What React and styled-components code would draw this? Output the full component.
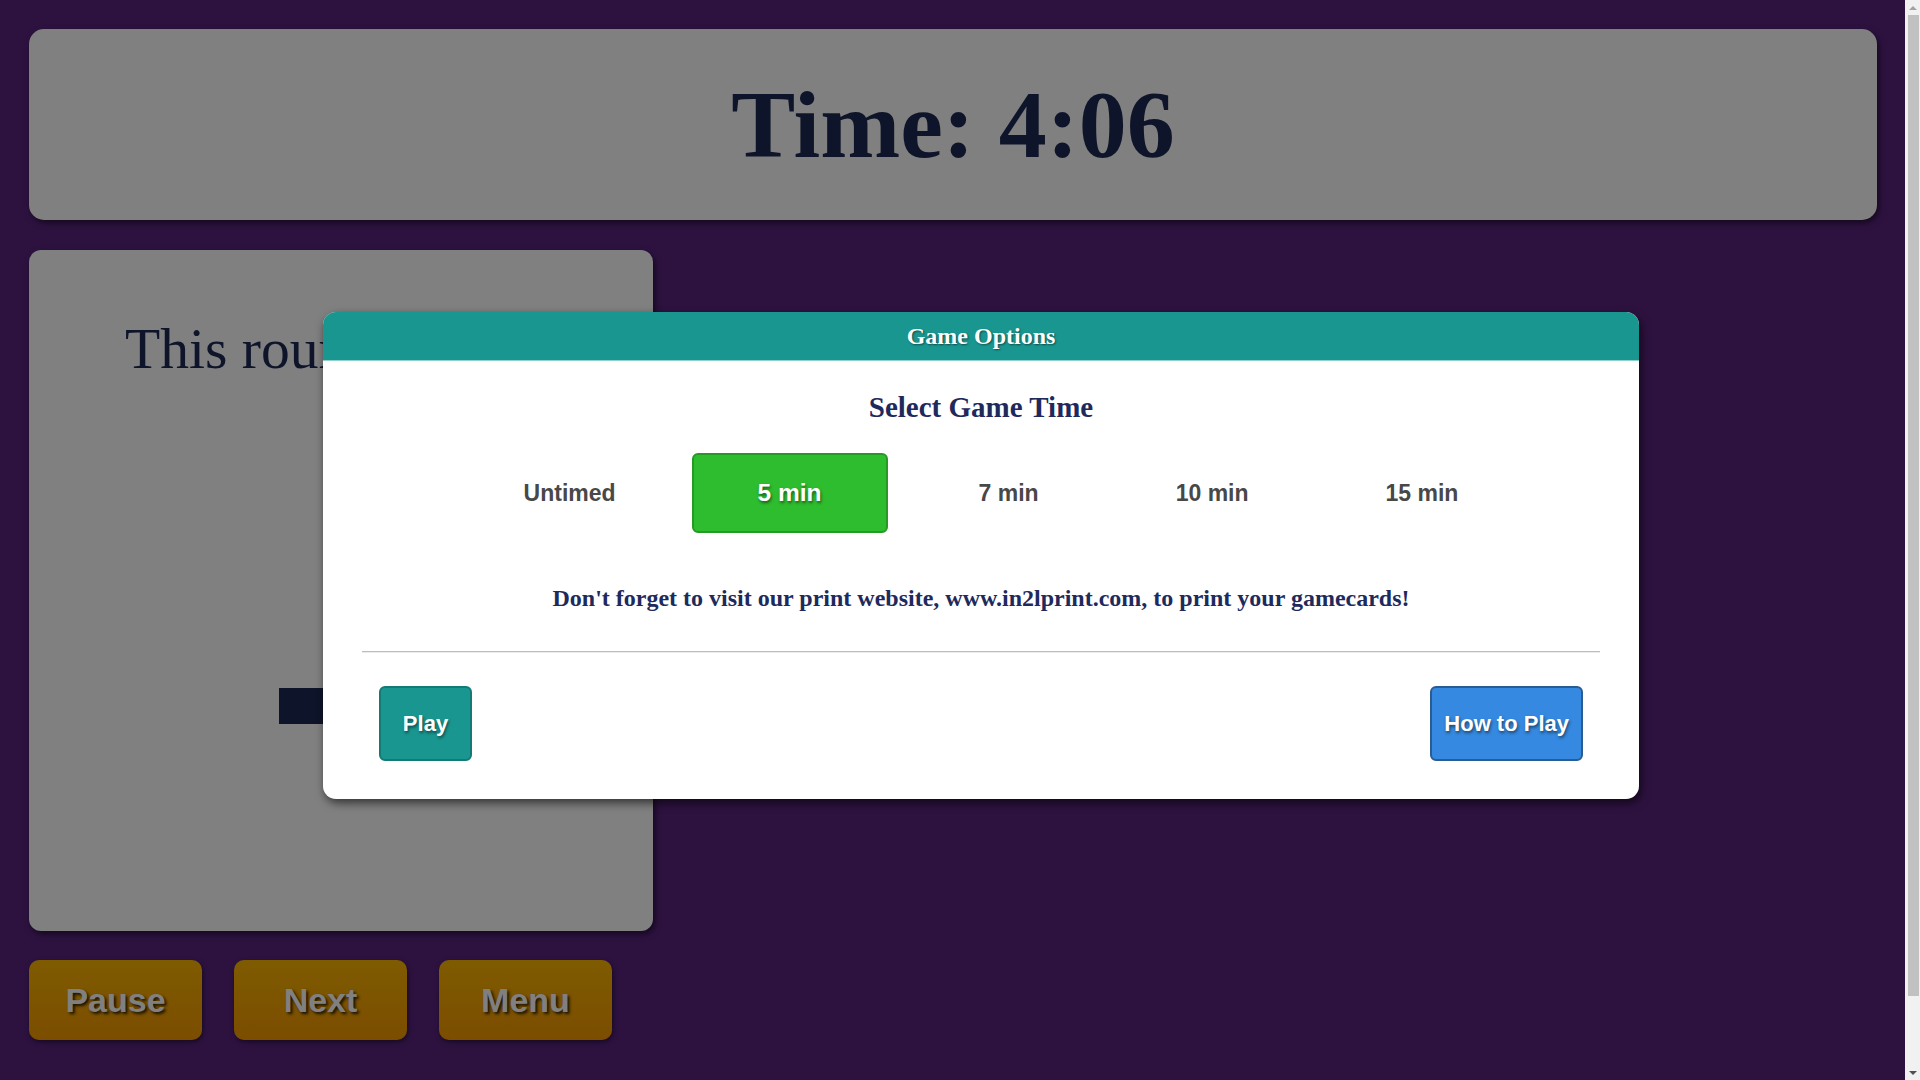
import React, { useState } from "react";
import styled, { createGlobalStyle } from "styled-components";

const GlobalStyle = createGlobalStyle`
  html, body {
    margin: 0;
    padding: 0;
    background: #2d1240;
  }
  body {
    font-family: "Liberation Serif", "Times New Roman", serif;
  }
`;

const TIMES = ["Untimed", "5 min", "7 min", "10 min", "15 min"];

export default function App() {
  const [selected, setSelected] = useState("5 min");

  return (
    <Page>
      <GlobalStyle />
      <TimerPanel>
        <TimerText>Time: 4:06</TimerText>
      </TimerPanel>

      <CardPanel>
        <RoundText>This round is over.</RoundText>
        <DarkButton>Start</DarkButton>
      </CardPanel>

      <Controls>
        <GoldButton>Pause</GoldButton>
        <GoldButton>Next</GoldButton>
        <GoldButton>Menu</GoldButton>
      </Controls>

      <Modal>
        <ModalHeader>Game Options</ModalHeader>
        <ModalBody>
          <SectionTitle>Select Game Time</SectionTitle>
          <OptionRow>
            {TIMES.map((t) => (
              <TimeOption
                key={t}
                $active={selected === t}
                onClick={() => setSelected(t)}
              >
                {t}
              </TimeOption>
            ))}
          </OptionRow>
          <Notice>
            Don't forget to visit our print website, www.in2lprint.com, to print your gamecards!
          </Notice>
          <Divider />
          <Footer>
            <ActionButton $tone="teal" $minWidth="93px">Play</ActionButton>
            <ActionButton $tone="blue">How to Play</ActionButton>
          </Footer>
        </ModalBody>
      </Modal>

      <Scrollbar>
        <ScrollArrow $dir="up" />
        <ScrollThumb />
        <ScrollArrow $dir="down" />
      </Scrollbar>
    </Page>
  );
}

const Page = styled.div`
  position: relative;
  box-sizing: border-box;
  width: 1905px;
  min-height: 1156px;
  padding: 29px 28px 116px 29px;
  background: #2d1240;
`;

const TimerPanel = styled.div`
  height: 191px;
  background: #808080;
  border-radius: 15px;
  box-shadow: 2px 3px 6px rgba(0, 0, 0, 0.55);
  display: flex;
  align-items: center;
  justify-content: center;
`;

const TimerText = styled.h1`
  margin: 0;
  font-family: "Liberation Serif", "Times New Roman", serif;
  font-weight: 700;
  font-size: 96px;
  color: #0e1429;
`;

const CardPanel = styled.div`
  margin-top: 30px;
  width: 624px;
  height: 681px;
  background: #808080;
  border-radius: 12px;
  box-shadow: 2px 3px 6px rgba(0, 0, 0, 0.55);
  display: flex;
  flex-direction: column;
  align-items: center;
`;

const RoundText = styled.div`
  margin-top: 66px;
  font-family: "Liberation Serif", "Times New Roman", serif;
  font-size: 57.6px;
  color: #0e1429;
`;

const DarkButton = styled.div`
  margin-top: 307px;
  width: 124px;
  height: 36px;
  background: #0e1429;
  color: #0e1429;
  font-family: "Liberation Sans", Arial, sans-serif;
  display: flex;
  align-items: center;
  justify-content: center;
`;

const Controls = styled.div`
  margin-top: 29px;
  display: flex;
  gap: 32px;
`;

const GoldButton = styled.button`
  width: 173px;
  height: 80px;
  border: none;
  border-radius: 10px;
  background: linear-gradient(180deg, #7f5b00 0%, #7b4d00 100%);
  box-shadow: 1px 2px 5px rgba(0, 0, 0, 0.5);
  font-family: "Liberation Sans", Arial, sans-serif;
  font-weight: 700;
  font-size: 34px;
  color: #808080;
  text-shadow: 2px 2px 3px rgba(0, 0, 0, 0.8);
  cursor: pointer;
`;

const Modal = styled.div`
  position: absolute;
  left: 323px;
  top: 312px;
  width: 1316px;
  background: #fff;
  border-radius: 13px;
  overflow: hidden;
  box-shadow: 2px 4px 10px rgba(0, 0, 0, 0.6);
`;

const ModalHeader = styled.div`
  height: 48px;
  background: #1a9690;
  border-bottom: 1px solid #8fd0cc;
  display: flex;
  align-items: center;
  justify-content: center;
  font-family: "Liberation Serif", "Times New Roman", serif;
  font-weight: 700;
  font-size: 24px;
  color: #fff;
  text-shadow: 1px 1px 2px rgba(0, 0, 0, 0.5);
`;

const ModalBody = styled.div`
  padding: 0 39px 38px;
  display: flex;
  flex-direction: column;
`;

const SectionTitle = styled.h2`
  margin: 30px 0 0;
  text-align: center;
  font-family: "Liberation Serif", "Times New Roman", serif;
  font-weight: 700;
  font-size: 29px;
  color: #1f2a5c;
`;

const OptionRow = styled.div`
  margin-top: 29px;
  padding-left: 20px;
  display: flex;
  justify-content: center;
  align-items: center;
  gap: 15px;
  height: 80px;
`;

const TimeOption = styled.button`
  box-sizing: border-box;
  height: ${(p) => (p.$active ? "80px" : "auto")};
  width: ${(p) => (p.$active ? "196px" : "auto")};
  margin-right: ${(p) => (p.$active ? "15px" : "0")};
  padding: ${(p) => (p.$active ? "0" : "0 61px")};
  border: ${(p) => (p.$active ? "2px solid #259a25" : "none")};
  border-radius: 6px;
  background: ${(p) => (p.$active ? "#2ebd2e" : "transparent")};
  font-family: "Liberation Sans", Arial, sans-serif;
  font-weight: 700;
  font-size: ${(p) => (p.$active ? "24.5px" : "23px")};
  color: ${(p) => (p.$active ? "#fff" : "#484848")};
  text-shadow: ${(p) => (p.$active ? "1px 2px 3px rgba(0,0,0,0.5)" : "none")};
  cursor: pointer;
`;

const Notice = styled.p`
  margin: 52px 0 0;
  text-align: center;
  font-family: "Liberation Serif", "Times New Roman", serif;
  font-weight: 700;
  font-size: 24px;
  color: #1f2a5c;
`;

const Divider = styled.hr`
  margin: 39px 0 0;
  border: none;
  border-top: 1px solid #bdbdbd;
  border-bottom: 1px solid #ececec;
`;

const Footer = styled.div`
  margin-top: 33px;
  padding: 0 17px;
  display: flex;
  justify-content: space-between;
`;

const tones = {
  teal: { bg: "#1a9690", border: "#137a75" },
  blue: { bg: "#3589e0", border: "#2a5c94" },
};

const ActionButton = styled.button`
  box-sizing: border-box;
  height: 75px;
  min-width: ${(p) => p.$minWidth || "auto"};
  padding: 0 12px;
  border: 2px solid ${(p) => tones[p.$tone].border};
  border-radius: 6px;
  background: ${(p) => tones[p.$tone].bg};
  font-family: "Liberation Sans", Arial, sans-serif;
  font-weight: 700;
  font-size: 22px;
  color: #fff;
  text-shadow: 1px 2px 3px rgba(0, 0, 0, 0.5);
  cursor: pointer;
`;

const Scrollbar = styled.div`
  position: fixed;
  top: 0;
  right: 0;
  width: 15px;
  height: 100vh;
  background: #f1f1f1;
  display: flex;
  flex-direction: column;
  align-items: center;
`;

const ScrollArrow = styled.div`
  flex: none;
  width: 15px;
  height: 15px;
  display: flex;
  align-items: center;
  justify-content: center;
  margin-top: ${(p) => (p.$dir === "down" ? "auto" : "0")};

  &::before {
    content: "";
    border-left: 4px solid transparent;
    border-right: 4px solid transparent;
    ${(p) =>
      p.$dir === "up"
        ? "border-bottom: 4px solid #a3a3a3;"
        : "border-top: 4px solid #505050;"}
  }
`;

const ScrollThumb = styled.div`
  flex: none;
  width: 11px;
  height: 981px;
  margin-left: 2px;
  background: #c1c1c1;
`;
